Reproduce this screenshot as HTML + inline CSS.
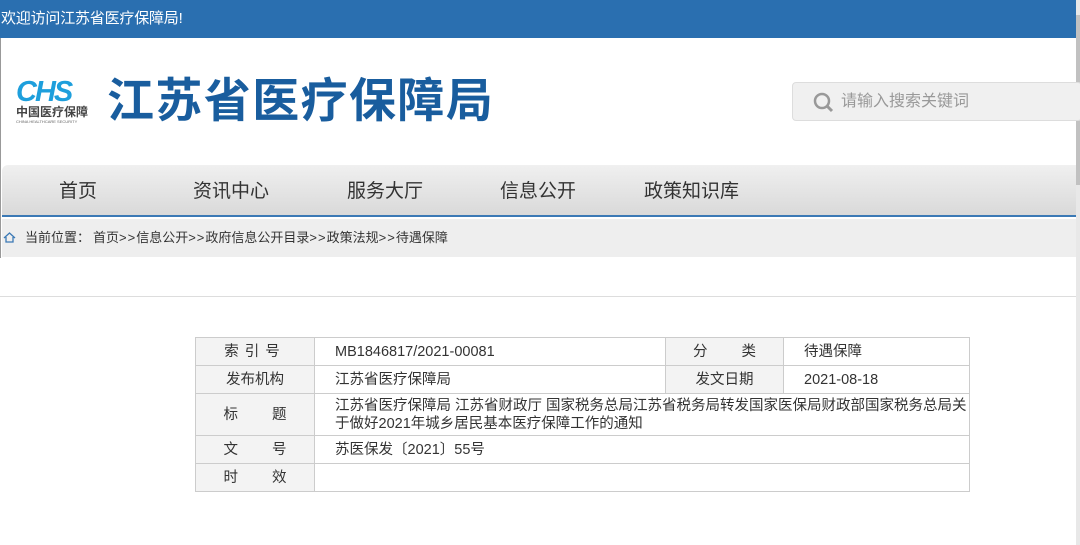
<!DOCTYPE html>
<html><head><meta charset="utf-8"><style>
*{margin:0;padding:0;box-sizing:border-box}
body{width:1080px;height:545px;overflow:hidden;background:#fff;font-family:"Liberation Sans","Noto Sans CJK SC",sans-serif;position:relative}
.top{position:absolute;left:0;top:0;width:1076px;height:38px;background:#2a6fb0;color:#fff;font-size:15px;line-height:38px;padding-left:1px;letter-spacing:-0.2px}
.sb{position:absolute;right:0;top:0;width:4px;height:545px;background:#e8e8e8}
.sb i{position:absolute;left:0;top:15px;width:4px;height:170px;background:#c1c1c1}
.lb{position:absolute;left:0;top:38px;width:1px;height:220px;background:#999}
.logo{position:absolute;left:16px;top:79px}
.title{position:absolute;left:107px;top:73px;font-size:47px;font-weight:bold;color:#195d9e;letter-spacing:1.4px;line-height:56px}
.search{position:absolute;left:792px;top:82px;width:290px;height:39px;background:#f0f0f0;border:1px solid #ddd;border-radius:4px;color:#999;font-size:16px;line-height:37px;padding-left:48px}
.nav{position:absolute;left:2px;top:165px;width:1074px;height:52px;background:linear-gradient(#f0f0f0,#d9d9d9);border-radius:6px 0 0 0;border-bottom:2px solid #3b79b5}
.nav span{position:absolute;top:0;line-height:54px;font-size:19px;color:#333}
.bc{position:absolute;left:2px;top:219px;width:1074px;height:38px;background:#eee;font-size:13px;line-height:38px;color:#333}
.g{letter-spacing:1px}
.hr{position:absolute;left:0;top:296px;width:1076px;height:1px;background:#ddd}
table{position:absolute;left:195px;top:337px;width:775px;border-collapse:collapse;font-size:14.5px;color:#333}
td{border:1px solid #ccc;padding:0 0 0 20px;height:28px;line-height:18px}
td.l{background:#f3f3f3;text-align:center;padding:0;letter-spacing:0}
</style></head><body>
<div class="top">欢迎访问江苏省医疗保障局!</div>
<div class="sb"><i></i></div>
<div class="lb"></div>
<div class="logo">
<div style="font:italic bold 29px 'Liberation Sans',sans-serif;color:#1e9fdc;letter-spacing:-2px;line-height:26px;width:74px">CHS</div>
<div style="font-size:12px;font-weight:bold;color:#444;line-height:13px;margin-top:1px">中国医疗保障</div>
<div style="font-size:4px;color:#666;line-height:6px">CHINA HEALTHCARE SECURITY</div>
</div>
<div class="title">江苏省医疗保障局</div>
<div class="search"><svg style="position:absolute;left:20px;top:9px" width="21" height="21" viewBox="0 0 21 21"><circle cx="9" cy="9" r="7" fill="none" stroke="#999" stroke-width="2.5"/><path d="M14 14l5 5" stroke="#999" stroke-width="3"/></svg>请输入搜索关键词</div>
<div class="nav"><span style="left:57px">首页</span><span style="left:191px">资讯中心</span><span style="left:345px">服务大厅</span><span style="left:498px">信息公开</span><span style="left:642px">政策知识库</span></div>
<div class="bc"><svg style="position:absolute;left:1px;top:13px" width="13" height="11" viewBox="0 0 13 11"><path d="M1 6L6.5 1 12 6M3 5v5h7V5" fill="none" stroke="#3b79b5" stroke-width="1.3"/></svg><span style="position:absolute;left:23px">当前位置：</span><span style="position:absolute;left:91px">首页<span class="g">&gt;&gt;</span>信息公开<span class="g">&gt;&gt;</span>政府信息公开目录<span class="g">&gt;&gt;</span>政策法规<span class="g">&gt;&gt;</span>待遇保障</span></div>
<div class="hr"></div>
<table>
<tr><td class="l" style="width:119px;letter-spacing:6px">索引号</td><td style="width:351px">MB1846817/2021-00081</td><td class="l" style="width:118px;word-spacing:30px">分 类</td><td>待遇保障</td></tr>
<tr><td class="l">发布机构</td><td>江苏省医疗保障局</td><td class="l">发文日期</td><td>2021-08-18</td></tr>
<tr><td class="l" style="height:42px;word-spacing:30px">标 题</td><td colspan="3" style="line-height:18px;padding-left:20px;padding-right:0">江苏省医疗保障局 江苏省财政厅 国家税务总局江苏省税务局转发国家医保局财政部国家税务总局关<br>于做好2021年城乡居民基本医疗保障工作的通知</td></tr>
<tr><td class="l" style="word-spacing:30px">文 号</td><td colspan="3">苏医保发〔2021〕55号</td></tr>
<tr><td class="l" style="word-spacing:30px">时 效</td><td colspan="3"></td></tr>
</table>
</body></html>
